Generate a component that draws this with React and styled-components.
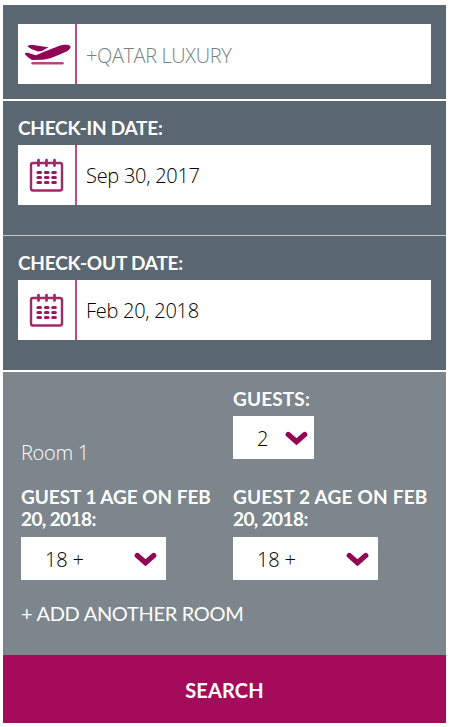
import React from "react";
import styled, { createGlobalStyle } from "styled-components";

const GlobalStyle = createGlobalStyle`
  * {
    box-sizing: border-box;
  }
  body {
    margin: 0;
    background: #fff;
  }
`;

const Panel = styled.form`
  width: 443px;
  margin: 5px 0 0 3px;
  font-family: "Open Sans", "Noto Sans", sans-serif;
  font-weight: 300;
`;
const Section = styled.section`
  height: ${(p) => p.$height}px;
  padding: ${(p) => p.$top}px 15px 0;
  background: #5b6770;
  border-bottom: ${(p) => p.$border || "none"};
`;
const Label = styled.label`
  display: block;
  font-family: Lato, sans-serif;
  font-size: 19px;
  font-weight: 700;
  line-height: 22px;
  letter-spacing: ${(p) => p.$spacing || 0}px;
  color: #fff;
  white-space: nowrap;
`;
const Field = styled.div`
  display: flex;
  align-items: center;
  height: 60px;
  margin-top: ${(p) => p.$gap || 0}px;
  background: #fff;
`;
const IconBox = styled.div`
  width: 59px;
  height: 60px;
  flex-shrink: 0;
  border-right: 2px solid #bd4d87;
  & > svg {
    display: block;
  }
`;
const Value = styled.span`
  padding: ${(p) => (p.$muted ? 4 : 2)}px 0 0 9px;
  font-size: 20px;
  line-height: 28px;
  letter-spacing: ${(p) => p.$spacing || 0}px;
  color: ${(p) => (p.$muted ? "#757f85" : "#000")};
  white-space: nowrap;
`;
const Rooms = styled.section`
  height: 283px;
  padding: 16px 0 0 18px;
  background: #7c868c;
`;
const Columns = styled.div`
  display: grid;
  grid-template-columns: 212px 1fr;
`;
const RoomName = styled.div`
  padding-top: 51px;
  font-size: 20px;
  line-height: 28px;
  letter-spacing: -0.3px;
  color: #fff;
`;
const AgeRow = styled(Columns)`
  margin-top: 19px;
`;
const SelectBox = styled.div`
  display: flex;
  align-items: center;
  justify-content: space-between;
  width: ${(p) => p.$width}px;
  height: 43px;
  margin-top: ${(p) => p.$gap}px;
  padding: 2px ${(p) => p.$right}px 0 24px;
  background: #fff;
  color: #000;
  font-size: 20px;
  letter-spacing: -0.2px;
`;
const AddRoom = styled.div`
  margin-top: 20px;
  font-family: Lato, sans-serif;
  font-size: 20px;
  font-weight: 400;
  line-height: 26px;
  letter-spacing: -0.3px;
  color: #fff;
`;
const SearchButton = styled.button`
  display: block;
  width: 100%;
  height: 68px;
  padding: 1px 0 0;
  border: none;
  background: #a50b5b;
  color: #fff;
  font-family: Lato, sans-serif;
  font-size: 20px;
  font-weight: 700;
  letter-spacing: 0.15px;
`;

const Plane = () => (
  <svg width="57" height="60" viewBox="0 0 57 60" fill="#910654">
    <path d="M9.5 22.5C10 21.2 13 20.8 15 21L30.5 23.2L24 27L20 27.5C15 26 11 23.7 9.5 22.5Z" />
    <path d="M6.7 29.8C7.2 28.6 10 28.6 11.2 29.2L18 31.3L26 27.8L39 22.7C44 20.7 49.5 20.2 52 21.8C53.7 23.3 51 26.6 48 27.8C38 31.8 31 35.9 23 35.7L14 35.9C11 34.5 8 31.6 6.7 29.8Z" />
    <path d="M14.5 39.3H44.5" stroke="#b4467c" strokeWidth="2.4" strokeLinecap="round" />
  </svg>
);

const Calendar = () => (
  <svg width="57" height="60" viewBox="0 0 57 60" fill="none" stroke="#a3286a">
    <rect x="13" y="18" width="31" height="27.5" rx="2" strokeWidth="2.4" />
    <path d="M20.5 15.2V20.5M28.5 15.2V20.5M36.5 15.2V20.5" strokeWidth="2.8" strokeLinecap="round" />
    <path
      d="M20 27.5H22.5M27.5 27.5H30M34.8 27.5H37.3M20 32.5H22.5M27.5 32.5H30M34.8 32.5H37.3M20 37.5H22.5M27.5 37.5H30M34.8 37.5H37.3"
      stroke="#9c1760"
      strokeWidth="3.2"
      strokeLinecap="round"
    />
  </svg>
);

const Chevron = () => (
  <svg width="24" height="16" viewBox="0 0 24 16" fill="none">
    <path d="M4.3 3.6L12.5 10.7L20.7 3.6" stroke="#910654" strokeWidth="5.3" strokeLinecap="round" />
  </svg>
);

const DateSection = ({ label, value, spacing, ...rest }) => (
  <Section $top={16} {...rest}>
    <Label $spacing={spacing}>{label}</Label>
    <Field $gap={6}>
      <IconBox>
        <Calendar />
      </IconBox>
      <Value $spacing={-0.27}>{value}</Value>
    </Field>
  </Section>
);

const Age = ({ guest, spacing }) => (
  <div>
    <Label $spacing={spacing}>GUEST {guest} AGE ON FEB</Label>
    <Label $spacing={-0.6}>20, 2018:</Label>
    <SelectBox $width={145} $gap={7} $right={9}>
      18 +
      <Chevron />
    </SelectBox>
  </div>
);

const App = () => {
  return (
    <>
      <GlobalStyle />
      <Panel>
        <Section $height={96} $top={19} $border="2px solid #fff">
          <Field>
            <IconBox>
              <Plane />
            </IconBox>
            <Value $muted $spacing={-0.4}>
              +QATAR LUXURY
            </Value>
          </Field>
        </Section>
        <DateSection
          label="CHECK-IN DATE:"
          value="Sep 30, 2017"
          spacing={-0.25}
          $height={135}
          $border="1px solid #c3c7ca"
        />
        <DateSection
          label="CHECK-OUT DATE:"
          value="Feb 20, 2018"
          spacing={-0.2}
          $height={136}
          $border="2px solid #fff"
        />
        <Rooms>
          <Columns>
            <RoomName>Room 1</RoomName>
            <div>
              <Label $spacing={0.15}>GUESTS:</Label>
              <SelectBox $width={81} $gap={6} $right={6}>
                2
                <Chevron />
              </SelectBox>
            </div>
          </Columns>
          <AgeRow>
            <Age guest={1} spacing={-0.05} />
            <Age guest={2} spacing={0.22} />
          </AgeRow>
          <AddRoom>+ ADD ANOTHER ROOM</AddRoom>
        </Rooms>
        <SearchButton type="button">SEARCH</SearchButton>
      </Panel>
    </>
  );
};

export default App;
